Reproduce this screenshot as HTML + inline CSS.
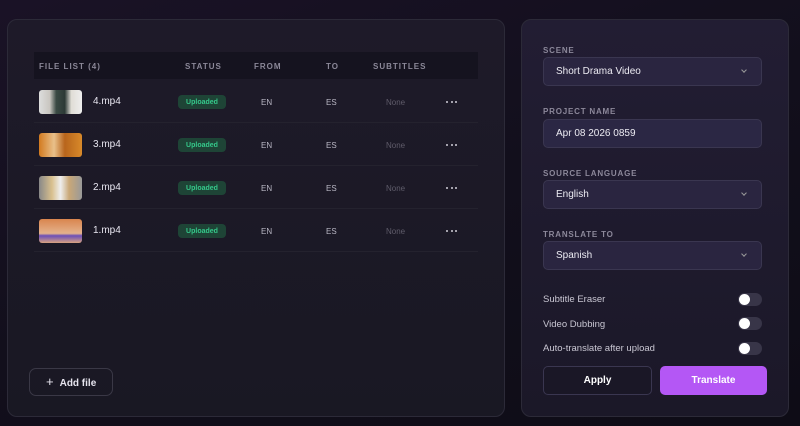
<!DOCTYPE html>
<html><head><meta charset="utf-8"><style>
*{box-sizing:border-box;margin:0;padding:0}
body{width:800px;height:426px;overflow:hidden;background:linear-gradient(160deg,#1a1226 0%,#120f1c 50%,#0e0c16 100%);font-family:"Liberation Sans",sans-serif;color:#e6e4ee;position:relative}
.panel{position:absolute;border:1px solid #2c2a38;border-radius:10px}
.lp{left:7px;top:19px;width:498px;height:398px;background:linear-gradient(180deg,#1e1a29,#191823)}
.rp{left:521px;top:19px;width:268px;height:398px;background:linear-gradient(180deg,#221d33,#1b1828)}
.th{position:absolute;left:34px;top:52px;width:444px;height:27px;background:#15131f}
.hd{position:absolute;top:62px;font-size:8px;font-weight:bold;letter-spacing:1px;color:#8b8898}
.row{position:absolute;left:34px;width:444px;height:43px;border-bottom:1px solid #24222e}
.thumb{position:absolute;left:5px;top:10px;width:43px;height:24px;border-radius:3px}
.fn{position:absolute;left:59px;top:16px;font-size:10px;color:#e8e6f0}
.badge{position:absolute;left:144px;top:15px;width:48px;height:14px;border-radius:4px;background:#1e4436;color:#35c88a;font-size:7px;font-weight:bold;text-align:center;line-height:15px}
.c{position:absolute;top:18px;font-size:8px;color:#b9b7c4}
.dots{position:absolute;left:412px;top:21px;width:12px;height:2px}
.dots i{position:absolute;top:0;width:2.4px;height:2.4px;border-radius:50%;background:#d0ced8}
.lbl{position:absolute;left:543px;font-size:8px;font-weight:bold;letter-spacing:.8px;color:#8c889a}
.sel{position:absolute;left:543px;width:219px;height:29px;border:1px solid #3a3650;border-radius:5px;background:#2a2540;font-size:10px;color:#ecebf2;padding-left:12px;line-height:28px}
.chev{position:absolute;right:15px;top:10px;width:4px;height:4px;border-right:1px solid #999;border-bottom:1px solid #999;transform:rotate(45deg)}
.tl{position:absolute;left:543px;font-size:9.5px;color:#c9c7d3}
.tg{position:absolute;left:738px;width:24px;height:13px;border-radius:7px;background:#383548}
.tg::after{content:"";position:absolute;left:1px;top:1px;width:11px;height:11px;border-radius:50%;background:#fff}
</style></head><body>
<div class="panel lp"></div>
<div class="panel rp"></div>
<div class="th"></div>
<div class="hd" style="left:39px">FILE LIST (4)</div>
<div class="hd" style="left:185px">STATUS</div>
<div class="hd" style="left:254px">FROM</div>
<div class="hd" style="left:326px">TO</div>
<div class="hd" style="left:373px">SUBTITLES</div>

<div class="row" style="top:80px"><div class="thumb" style="background:linear-gradient(90deg,#ddd 0,#c9c6c0 25%,#3a4a44 40%,#2c3a36 60%,#e0ddd6 75%,#eee)"></div><div class="fn">4.mp4</div><div class="badge">Uploaded</div><div class="c" style="left:227px">EN</div><div class="c" style="left:292px">ES</div><div class="c" style="left:352px;color:#5f5c6a">None</div><div class="dots"><i style="left:0"></i><i style="left:4.5px"></i><i style="left:9px"></i></div></div>
<div class="row" style="top:123px"><div class="thumb" style="background:linear-gradient(90deg,#d27a1f,#e9c08a 35%,#b8651c 60%,#d88a2a)"></div><div class="fn">3.mp4</div><div class="badge">Uploaded</div><div class="c" style="left:227px">EN</div><div class="c" style="left:292px">ES</div><div class="c" style="left:352px;color:#5f5c6a">None</div><div class="dots"><i style="left:0"></i><i style="left:4.5px"></i><i style="left:9px"></i></div></div>
<div class="row" style="top:166px"><div class="thumb" style="background:linear-gradient(90deg,#888,#d9c08e 30%,#eee 50%,#c9a878 70%,#999)"></div><div class="fn">2.mp4</div><div class="badge">Uploaded</div><div class="c" style="left:227px">EN</div><div class="c" style="left:292px">ES</div><div class="c" style="left:352px;color:#5f5c6a">None</div><div class="dots"><i style="left:0"></i><i style="left:4.5px"></i><i style="left:9px"></i></div></div>
<div class="row" style="top:209px"><div class="thumb" style="background:linear-gradient(180deg,#d9854e,#e4b28c 60%,#6b4fb8 70%,#d9a380)"></div><div class="fn">1.mp4</div><div class="badge">Uploaded</div><div class="c" style="left:227px">EN</div><div class="c" style="left:292px">ES</div><div class="c" style="left:352px;color:#5f5c6a">None</div><div class="dots"><i style="left:0"></i><i style="left:4.5px"></i><i style="left:9px"></i></div></div>

<div style="position:absolute;left:29px;top:368px;width:84px;height:28px;border:1px solid #3a3846;border-radius:7px;font-size:10px;font-weight:bold;color:#e6e4ee;line-height:26px;padding-left:16px"><span style="font-weight:normal;font-size:13px;margin-right:6px">+</span>Add file</div>

<div class="lbl" style="top:46px">SCENE</div>
<div class="sel" style="top:57px">Short Drama Video<div class="chev"></div></div>
<div class="lbl" style="top:107px">PROJECT NAME</div>
<div class="sel" style="top:119px;background:#2b2744">Apr 08 2026 0859</div>
<div class="lbl" style="top:169px">SOURCE LANGUAGE</div>
<div class="sel" style="top:180px">English<div class="chev"></div></div>
<div class="lbl" style="top:230px">TRANSLATE TO</div>
<div class="sel" style="top:241px">Spanish<div class="chev"></div></div>

<div class="tl" style="top:294px">Subtitle Eraser</div><div class="tg" style="top:293px"></div>
<div class="tl" style="top:319px">Video Dubbing</div><div class="tg" style="top:317px"></div>
<div class="tl" style="top:343px">Auto-translate after upload</div><div class="tg" style="top:342px"></div>

<div style="position:absolute;left:543px;top:366px;width:109px;height:29px;border:1px solid #3a3650;border-radius:5px;background:#1a1726;text-align:center;line-height:28px;font-size:10px;font-weight:bold;color:#fff">Apply</div>
<div style="position:absolute;left:660px;top:366px;width:107px;height:29px;border-radius:5px;background:#b457f5;text-align:center;line-height:29px;font-size:10px;font-weight:bold;color:#fff">Translate</div>
</body></html>
